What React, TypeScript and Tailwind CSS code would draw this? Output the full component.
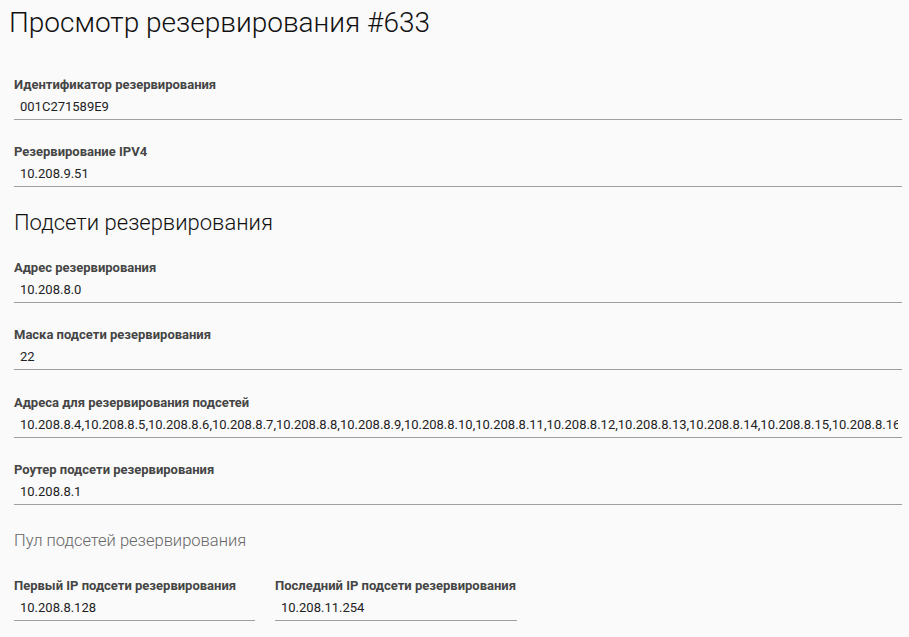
import React from "react";

const font = { fontFamily: "Roboto, 'Noto Sans', sans-serif" };

function Field({ label, value, className = "" }: { label: string; value: string; className?: string }) {
  return (
    <div className={`flex flex-col ${className}`}>
      <div className="text-[13px] font-bold text-[#454545] leading-[16px] whitespace-nowrap">{label}</div>
      <div className="border-b border-[#9e9e9e] pl-[6px] pr-[4px] pt-[5px] pb-[4px]">
        <div className="text-[13px] text-[#222] leading-[17px] whitespace-nowrap overflow-hidden">{value}</div>
      </div>
    </div>
  );
}

export default function App() {
  const addrs = Array.from({ length: 60 }, (_, i) => `10.208.8.${i + 4}`).join(",");
  return (
    <div className="min-h-[637px] w-[909px] bg-[#fafafa] overflow-hidden" style={font}>
      <h1 className="pl-[9px] pt-[6px] text-[28px] font-light text-[#111] leading-[34px]">Просмотр резервирования #633</h1>
      <div className="pl-[14px] pr-[7px] pt-[37px] flex flex-col">
        <Field label="Идентификатор резервирования" value="001C271589E9" />
        <Field className="mt-[24px]" label="Резервирование IPV4" value="10.208.9.51" />
        <h2 className="mt-[22px] text-[22px] font-light text-[#111] leading-[28px]">Подсети резервирования</h2>
        <Field className="mt-[23px]" label="Адрес резервирования" value="10.208.8.0" />
        <Field className="mt-[24px]" label="Маска подсети резервирования" value="22" />
        <Field className="mt-[25px]" label="Адреса для резервирования подсетей" value={addrs} />
        <Field className="mt-[24px]" label="Роутер подсети резервирования" value="10.208.8.1" />
        <h3 className="mt-[25px] text-[16.5px] font-light text-[#666] leading-[22px]">Пул подсетей резервирования</h3>
        <div className="mt-[26px] flex gap-[20px]">
          <Field className="w-[241px]" label="Первый IP подсети резервирования" value="10.208.8.128" />
          <Field className="w-[242px]" label="Последний IP подсети резервирования" value="10.208.11.254" />
        </div>
      </div>
    </div>
  );
}
